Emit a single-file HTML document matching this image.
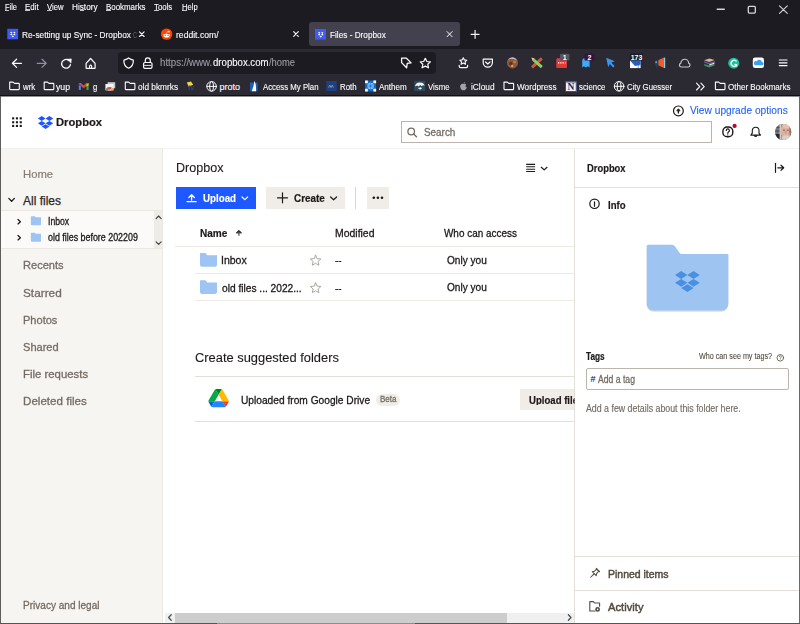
<!DOCTYPE html>
<html><head><meta charset="utf-8"><title>Files - Dropbox</title>
<style>
html,body{margin:0;padding:0;width:800px;height:624px;overflow:hidden;background:#1c1b22;font-family:"Liberation Sans",sans-serif;}
.a{position:absolute;box-sizing:border-box;}
.t{position:absolute;line-height:1;white-space:nowrap;transform-origin:0 0;}
svg{position:absolute;overflow:visible;}
</style></head><body>
<!-- browser chrome -->
<div class="a" style="left:0;top:0;width:800px;height:49px;background:#1c1b22"></div>
<div class="a" style="left:309px;top:22px;width:151px;height:24px;background:#42414d;border-radius:3px"></div>
<div class="a" style="left:0;top:49px;width:800px;height:46px;background:#2b2a33"></div>
<div class="a" style="left:118px;top:52px;width:318px;height:22px;background:#1c1b22;border-radius:4px"></div>
<div class="a" style="left:0;top:95px;width:800px;height:1px;background:#0f0f14"></div>
<!-- page -->
<div class="a" style="left:1px;top:96px;width:798px;height:527px;background:#ffffff"></div>
<div class="a" style="left:1px;top:148px;width:798px;height:1px;background:#f3f1ee"></div>
<div class="a" style="left:1px;top:149px;width:162px;height:474px;background:#f7f5f2"></div>
<div class="a" style="left:162px;top:149px;width:1px;height:474px;background:#ece9e5"></div>
<div class="a" style="left:1px;top:210px;width:161px;height:39px;background:#fbfaf8;border-top:1px solid #ebe8e4;border-bottom:1px solid #ebe8e4"></div>
<div class="a" style="left:154px;top:211px;width:8px;height:37px;background:#eeece9"></div>
<!-- search -->
<div class="a" style="left:401px;top:121px;width:311px;height:22px;border:1px solid #bbb5ae;background:#fff"></div>
<!-- buttons -->
<div class="a" style="left:176px;top:187px;width:80px;height:22px;background:#1e58ff"></div>
<div class="a" style="left:266px;top:187px;width:79px;height:22px;background:#f0ede8"></div>
<div class="a" style="left:355px;top:187px;width:1px;height:22px;background:#d9d5d0"></div>
<div class="a" style="left:367px;top:187px;width:22px;height:22px;background:#f0ede8"></div>
<!-- table lines -->
<div class="a" style="left:175px;top:246px;width:400px;height:1px;background:#eeebe6"></div>
<div class="a" style="left:195px;top:273px;width:380px;height:1px;background:#eeebe6"></div>
<div class="a" style="left:195px;top:300px;width:380px;height:1px;background:#eeebe6"></div>
<div class="a" style="left:195px;top:376px;width:380px;height:1px;background:#e3e0dc"></div>
<div class="a" style="left:195px;top:421px;width:380px;height:1px;background:#e3e0dc"></div>
<div class="a" style="left:376px;top:394px;width:24px;height:12px;background:#f0ede8;border-radius:6px"></div>
<div class="a" style="left:520px;top:389px;width:60px;height:21px;background:#f0ede8"></div>
<!-- right panel -->
<div class="a" style="left:574px;top:149px;width:225px;height:474px;background:#fff;border-left:1px solid #e3e0dc"></div>
<div class="a" style="left:575px;top:187px;width:224px;height:1px;background:#e3e0dc"></div>
<div class="a" style="left:575px;top:556px;width:224px;height:1px;background:#e3e0dc"></div>
<div class="a" style="left:575px;top:590px;width:224px;height:1px;background:#e3e0dc"></div>
<div class="a" style="left:586px;top:368px;width:203px;height:22px;border:1px solid #bbb5ae;border-radius:2px"></div>
<!-- h scrollbar -->
<div class="a" style="left:165px;top:613px;width:409px;height:10px;background:#f0f0f0"></div>
<div class="a" style="left:175px;top:613px;width:332px;height:10px;background:#cdcdcd"></div>
<!-- frame -->
<div class="a" style="left:0;top:96px;width:800px;height:1px;background:#8e8e90"></div>
<div class="a" style="left:0;top:96px;width:1px;height:528px;background:#5f5e5c"></div>
<div class="a" style="left:799px;top:96px;width:1px;height:528px;background:#6b6b6b"></div>
<div class="a" style="left:0;top:623px;width:800px;height:1px;background:#555555"></div>
<div class="a" style="left:217px;top:623px;width:198px;height:1px;background:#8e8e8e"></div>
<!-- menu underlines -->
<div class="a" style="left:5px;top:10px;width:4px;height:1px;background:#c8c8cc"></div>
<div class="a" style="left:25px;top:10px;width:5px;height:1px;background:#c8c8cc"></div>
<div class="a" style="left:47px;top:10px;width:5px;height:1px;background:#c8c8cc"></div>
<div class="a" style="left:80px;top:10px;width:4px;height:1px;background:#c8c8cc"></div>
<div class="a" style="left:106px;top:10px;width:5px;height:1px;background:#c8c8cc"></div>
<div class="a" style="left:154px;top:10px;width:5px;height:1px;background:#c8c8cc"></div>
<div class="a" style="left:182px;top:10px;width:5px;height:1px;background:#c8c8cc"></div>
<svg width="800" height="624" style="left:0;top:0">
<g fill="none" stroke="#fbfbfe" stroke-width="1.1" stroke-linecap="round" stroke-linejoin="round">
 <!-- tab close -->
 <path d="M139.5,31.9 L144.1,36.5 M144.1,31.9 L139.5,36.5" stroke-width="1.1"/>
 <path d="M293.7,31.7 L298.3,36.3 M298.3,31.7 L293.7,36.3" stroke-width="1.1"/>
 <path d="M447.1,31.6 L452.1,36.7 M452.1,31.6 L447.1,36.7" stroke-width="1"/>
 <!-- new tab -->
 <path d="M475.1,30.4 V38.3 M471.1,34.35 H479.1" stroke-width="1.15"/>
 <!-- window controls -->
 <path d="M717.3,9.2 H724.2" stroke-width="1.6" stroke="#d8d8dc"/>
 <rect x="748.3" y="6.3" width="7" height="6.8" rx="1" stroke="#d8d8dc" stroke-width="1.3"/>
 <path d="M779.5,5.8 L787.3,13.3 M787.3,5.8 L779.5,13.3" stroke="#d8d8dc" stroke-width="1.1"/>
 <!-- nav -->
 <path d="M21.5,63.3 H12.6 M16.6,59.2 L12.4,63.3 L16.6,67.4" stroke-width="1.2"/>
 <path d="M37.2,63.3 H46 M42,59.2 L46.2,63.3 L42,67.4" stroke="#8f8f9d" stroke-width="1.2"/>
 <path d="M70.4,64.6 A4.4,4.4 0 1 1 68.6,60.2" stroke-width="1.3"/>
 <path d="M67.3,59.3 L71.3,58.9 L71,62.8 Z" fill="#fbfbfe" stroke-width="0.6"/>
 <path d="M86.1,63.4 L90.6,58.5 L95.1,63.4 V67.9 Q95.1,68.3 94.7,68.3 H86.5 Q86.1,68.3 86.1,67.9 Z" stroke-width="1.2"/>
 <path d="M89.6,68.2 V66.1 A1,1 0 0 1 91.6,66.1 V68.2" stroke-width="1.1"/>
 <!-- url icons -->
 <path d="M128.6,57.9 Q131,59.6 133.3,60.2 Q133.6,66 128.6,68.2 Q123.6,66 123.9,60.2 Q126.2,59.6 128.6,57.9 Z" stroke-width="1.2"/>
 <path d="M145.3,62.3 V60.4 A2.5,2.5 0 0 1 150.3,60.4 V62.3" stroke-width="1.2"/>
 <rect x="143.6" y="62.5" width="8.4" height="5.8" rx="1.3" stroke-width="1.2"/>
 <path d="M144.5,65.4 H151" stroke-width="0.9"/>
 <path d="M401.6,58.2 H406.4 L411.1,62.9 L407.2,63.4 L406.6,67.8 L401.6,62.6 Z" stroke-width="1.3"/>
 <path d="M425.3,58.3 L426.9,61.5 L430.4,61.9 L427.8,64.3 L428.5,67.8 L425.3,66.1 L422.1,67.8 L422.8,64.3 L420.2,61.9 L423.7,61.5 Z" stroke-width="1.2"/>
 <!-- ext: star tray -->
 <path d="M463.3,57.7 L464.4,59.9 L466.8,60.2 L465.1,61.9 L465.5,64.3 L463.3,63.1 L461.1,64.3 L461.5,61.9 L459.8,60.2 L462.2,59.9 Z" stroke-width="1.1"/>
 <path d="M459.2,65.3 V66.3 Q459.2,67.6 460.5,67.6 H466.3 Q467.6,67.6 467.6,66.3 V65.3" stroke-width="1.2"/>
 <!-- pocket -->
 <path d="M483.2,59.2 H492.4 V62.6 A4.6,4.6 0 0 1 483.2,62.6 Z" stroke-width="1.2"/>
 <path d="M485.6,62 L487.8,64 L490,62" stroke-width="1.2"/>
 <!-- cloud outline -->
 <path d="M681.2,67 H688.2 A2,2 0 0 0 688.6,63.1 A3.7,3.7 0 0 0 680.9,63.1 A2,2 0 0 0 681.2,67 Z" stroke="#c5c5cc" stroke-width="1.2"/>
 <!-- hamburger -->
 <path d="M779.3,60 H787 M779.3,62.8 H787 M779.3,65.6 H787" stroke-width="1.2"/>
 <!-- bookmark folders -->
 <path id="bf" d="M9.7,82.1 H13 L14.5,83.4 H18.7 Q19.3,83.4 19.3,84 V89 Q19.3,89.6 18.7,89.6 H10.3 Q9.7,89.6 9.7,89 Z" stroke-width="1.1"/>
 <use href="#bf" x="34.5"/>
 <use href="#bf" x="115.6"/>
 <use href="#bf" x="494.3"/>
 <use href="#bf" x="705.7"/>
 <!-- globe -->
 <g id="gl" stroke-width="1">
  <circle cx="211.6" cy="86.4" r="4.8"/>
  <ellipse cx="211.6" cy="86.4" rx="2" ry="4.8"/>
  <path d="M206.9,86.4 H216.3"/>
 </g>
 <use href="#gl" x="407.5" y="-0.1"/>
 <!-- >> -->
 <path d="M696.5,83.2 L699.8,86.6 L696.5,90 M700.9,83.2 L704.2,86.6 L700.9,90" stroke-width="1.1"/>
</g>
<!-- tab icons -->
<rect x="7.3" y="28.8" width="10.8" height="10.5" fill="#3e5bfa"/>
<rect x="315" y="29" width="11" height="10.6" fill="#3e5bfa"/>
<g id="dbw" fill="#fff"><path d="M10.05,32.50 L11.30,31.65 L12.55,32.50 L11.30,33.35 Z M13.15,32.50 L14.40,31.65 L15.65,32.50 L14.40,33.35 Z M10.05,34.40 L11.30,33.55 L12.55,34.40 L11.30,35.25 Z M13.15,34.40 L14.40,33.55 L15.65,34.40 L14.40,35.25 Z M11.60,36.30 L12.85,35.45 L14.10,36.30 L12.85,37.15 Z"/></g>
<use href="#dbw" x="307.9" y="0.3"/>
<circle cx="166.6" cy="34.1" r="5.7" fill="#ff4500"/>
<path d="M163.2,34.4 Q166.6,33.2 170,34.4 Q170,37.4 166.6,37.6 Q163.2,37.4 163.2,34.4 Z" fill="#fff"/>
<circle cx="168.9" cy="31.6" r="0.9" fill="#fff"/>
<circle cx="165.1" cy="35.3" r="0.75" fill="#ff4500"/><circle cx="168.1" cy="35.3" r="0.75" fill="#ff4500"/>
<path d="M166.6,33.6 L167.3,31.4 L168.6,31.6" stroke="#fff" stroke-width="0.5" fill="none"/>
<!-- extensions -->
<circle cx="512.5" cy="62.8" r="5.6" fill="#8a5a3a"/>
<path d="M508,60 Q512,57.5 517,60.5 A5.6,5.6 0 0 0 512.5,57.2 A5.6,5.6 0 0 0 508,60 Z" fill="#c9b8c8"/>
<circle cx="510.8" cy="63.6" r="1.8" fill="#5a3420"/>
<circle cx="514.6" cy="62" r="1.3" fill="#c08050"/>
<circle cx="512.2" cy="66" r="1.2" fill="#d09a6a"/>
<path d="M541.8,58.4 L532,67.4" stroke="#d9553a" stroke-width="2.8" stroke-linecap="butt"/>
<path d="M533.6,59.9 L541.8,67.2" stroke="#8ccc66" stroke-width="3" stroke-linecap="butt"/>
<path d="M531.4,57.6 L534.7,58.6 L532.6,61 Z" fill="#e3d3a8"/>
<rect x="556.3" y="58.2" width="10.7" height="9.9" rx="1.2" fill="#e53935"/>
<path d="M558,62.8 H565.6" stroke="#fff" stroke-width="1.3" stroke-dasharray="1.3 1"/>
<rect x="560" y="53.8" width="9.4" height="6.8" rx="1" fill="#55555c"/>
<text x="564.7" y="59.8" font-family="Liberation Sans" font-weight="bold" font-size="7" fill="#fff" text-anchor="middle">1</text>
<path d="M582.2,67.4 V61.5 A3.7,3.7 0 0 1 589.6,61.5 V67.4 L587.8,66.2 L585.9,67.4 L584,66.2 Z" fill="#3fa9f5"/>
<rect x="584.4" y="53.8" width="10" height="6.8" rx="1" fill="#3b0f3e"/>
<text x="589.4" y="59.8" font-family="Liberation Sans" font-weight="bold" font-size="7" fill="#fff" text-anchor="middle">2</text>
<path d="M606.2,57.8 L614.8,61.3 L611.3,62.6 L614.6,66 L613.1,67.4 L609.9,64 L608.2,67.3 Z" fill="#3b95ee"/>
<rect x="630" y="60.6" width="10.6" height="7.5" fill="#fff"/>
<path d="M630,60.6 L640.6,60.6 L640.6,64.5 L635,66 Z" fill="#1f62c8"/>
<path d="M636,65 H640.6 M638.2,63.5 V68" stroke="#1f62c8" stroke-width="0.6"/>
<rect x="629.8" y="53.6" width="13.4" height="7" rx="1" fill="#1e1d24"/>
<text x="636.5" y="59.8" font-family="Liberation Sans" font-weight="bold" font-size="7" fill="#fff" text-anchor="middle">173</text>
<path d="M658.2,60.2 L664,57.6 V68 L658.2,65.2 Z" fill="#f15a29"/>
<rect x="664" y="57.6" width="1.2" height="10.4" fill="#8ec9e8"/>
<rect x="655" y="60.2" width="3.2" height="5" fill="#1d3f5e"/>
<circle cx="656.2" cy="62.3" r="1" fill="#5fa8d8"/>
<rect x="656" y="65" width="1.6" height="2.6" fill="#1d3f5e"/>
<!-- books -->
<path d="M704,60.3 L709.5,58.4 L714.6,60 L709.2,62 Z" fill="#d8b48a"/>
<path d="M704,61.2 L709.2,63 L714.6,61 V62.5 L709.2,64.5 L704,62.6 Z" fill="#6b5bb5"/>
<path d="M704.3,64 L709.2,65.6 L714.4,63.8 V65.6 L709.2,67.5 L704.3,65.7 Z" fill="#3f8f5a"/>
<path d="M709.2,64.5 L714.6,62.5 L714.4,63.8 L709.2,65.6 Z" fill="#eee"/>
<circle cx="733.7" cy="63.2" r="5.5" fill="#15c39a"/>
<path d="M736.2,61 A3,3 0 1 0 736.4,65.3" fill="none" stroke="#fff" stroke-width="1.3" stroke-linecap="round"/>
<path d="M734.3,64.3 L736.7,64.6 L736.6,66.6" fill="none" stroke="#fff" stroke-width="1.1"/>
<rect x="752.8" y="57.6" width="11.2" height="10.5" rx="2.4" fill="#fff"/>
<path d="M755.2,65.2 H762 A1.6,1.6 0 0 0 762,62 A2.8,2.8 0 0 0 756.8,61.3 A2,2 0 0 0 755.2,65.2 Z" fill="#3aa0f0"/>
<!-- bookmark icons -->
<path d="M79.9,83.6 L83.7,86.9 L87.5,83.6" stroke="#ea4335" stroke-width="2.2" fill="none" stroke-linejoin="miter"/>
<rect x="78.8" y="83.2" width="2.1" height="6.7" fill="#4285f4"/>
<rect x="86.5" y="83.2" width="2.1" height="6.7" fill="#34a853"/>
<path d="M86.5,84.6 L88.6,83 V85.2 L86.5,86.6 Z" fill="#fbbc04"/>
<path d="M78.8,85.2 V83.4 L80.9,85 V86.6 Z" fill="#c5221f"/>
<rect x="107.6" y="82.2" width="7.6" height="6" fill="#c8c8cc"/>
<rect x="105.4" y="84" width="8.2" height="6.4" fill="#f4f4f4"/>
<defs><clipPath id="chc"><rect x="105.4" y="84" width="8.2" height="6.4"/></clipPath></defs>
<g clip-path="url(#chc)">
<path d="M106,90.4 A3.5,3.5 0 0 1 113,90.4 Z" fill="#ea4335"/>
<path d="M106,90.4 A3.5,3.5 0 0 1 107.4,87.6 L109.5,90.4 Z" fill="#34a853"/>
<path d="M111.6,87.6 A3.5,3.5 0 0 1 113,90.4 H109.5 Z" fill="#fbbc04"/>
<circle cx="109.5" cy="90.4" r="1.5" fill="#fff"/>
<circle cx="109.5" cy="90.4" r="1.1" fill="#4285f4"/>
</g>
<path d="M186.8,82.6 L191,81.4 L193.2,84.8 L188.6,86.4 Z" fill="#f5d442"/>
<text x="188.3" y="90.4" font-family="Liberation Sans" font-size="7.5" fill="#2a5a90">tv</text>
<path d="M250,82.5 H257.6 V91.3 H250 Z" fill="#1c5fb8"/>
<path d="M254.6,80.8 Q256.4,85 256,91.3 H251.8 Q253.8,86 254.6,80.8 Z" fill="#fff"/>
<rect x="326.2" y="81" width="10.6" height="10" fill="#1f3f7f"/>
<path d="M328.6,87.6 L329.8,85.2 L331,87.6 L332.2,85.2 L333.4,87.6" fill="none" stroke="#8fa5cf" stroke-width="0.8"/>
<rect x="365.1" y="80.5" width="11" height="11" fill="#0b6dcd"/>
<path d="M365.1,80.5 h2.7 v2.7 h-2.7Z M373.4,80.5 h2.7 v2.7 h-2.7Z M365.1,88.8 h2.7 v2.7 h-2.7Z M373.4,88.8 h2.7 v2.7 h-2.7Z" fill="#fff"/>
<circle cx="370.6" cy="86" r="3.2" fill="#9cc6f0"/>
<path d="M370.6,83 V89 M367.6,86 H373.6 M368.5,83.9 L372.7,88.1 M372.7,83.9 L368.5,88.1" stroke="#0b6dcd" stroke-width="0.6"/>
<rect x="414.2" y="80.8" width="11" height="10.2" fill="#2c4a5a"/>
<path d="M415,86.6 Q415.6,82.4 419.6,82.4 Q423.8,82.2 424.6,85.8 L423,85.2 L421.6,86.2 L420.2,85 L418.6,86.4 L417.2,85.4 Z" fill="#f2f2f2"/>
<path d="M417.4,87.4 Q420,90.8 422.6,87.4 Q420,89 417.4,87.4 Z" fill="#f2f2f2"/>
<circle cx="420.2" cy="88.4" r="1.1" fill="#f2f2f2"/>
<path d="M463.4,84 Q461.2,83.4 460.2,85.6 Q459.8,88.2 461.8,90 Q462.6,90.6 463.4,90 Q464.2,90.6 465,90 Q466.4,88.8 466.8,87.6 Q465.4,86.8 465.6,85.2 Q466,84.4 466.4,84.3 Q465.4,83.4 463.4,84 Z M463.4,83.6 Q463.6,82.2 465,81.9 Q464.9,83.3 463.4,83.6 Z" fill="#a3a3aa"/>
<rect x="565.2" y="81.6" width="11.4" height="10.2" fill="#f4f4f8"/>
<rect x="565.6" y="82" width="10.6" height="9.4" fill="none" stroke="#1b2a6b" stroke-width="0.8"/>
<text x="570.9" y="90.4" font-family="Liberation Serif" font-weight="bold" font-size="9.5" fill="#1b2a6b" text-anchor="middle">N</text>
</svg>
<svg width="800" height="624" style="left:0;top:0">
<!-- grid -->
<g fill="#1e1919">
 <rect x="12.1" y="117.3" width="2.1" height="2.1"/><rect x="15.9" y="117.3" width="2.1" height="2.1"/><rect x="19.7" y="117.3" width="2.1" height="2.1"/>
 <rect x="12.1" y="121.2" width="2.1" height="2.1"/><rect x="15.9" y="121.2" width="2.1" height="2.1"/><rect x="19.7" y="121.2" width="2.1" height="2.1"/>
 <rect x="12.1" y="124.9" width="2.1" height="2.1"/><rect x="15.9" y="124.9" width="2.1" height="2.1"/><rect x="19.7" y="124.9" width="2.1" height="2.1"/>
</g>
<!-- dropbox logo -->
<g transform="translate(37.9,116) scale(0.0652)" fill="#1e55ff">
 <path d="M58.86 0L0 37.5 58.86 75l58.87-37.5L58.86 0zM176.59 0l-58.86 37.5L176.59 75l58.86-37.5L176.59 0zM0 112.5L58.86 150l58.87-37.5L58.86 75 0 112.5zM176.59 75l-58.86 37.5 58.86 37.5 58.86-37.5L176.59 75zM58.86 162.5l58.87 37.5 58.86-37.5-58.86-37.5-58.86 37.5z"/>
</g>
<g fill="none" stroke="#1e1919" stroke-linecap="round" stroke-linejoin="round">
 <!-- upgrade -->
 <circle cx="678.4" cy="110.9" r="4.9" stroke-width="1.2"/>
 <path d="M678.4,109.6 V113" stroke-width="1.3"/>
 <path d="M676.9,110.6 L678.4,108.8 L679.9,110.6 Z" fill="#1e1919" stroke-width="0.8"/>
 <!-- help -->
 <rect x="722.9" y="127" width="9.9" height="9.8" rx="4.3" stroke-width="1.4"/>
 <path d="M726.3,130.5 A1.55,1.55 0 1 1 728.5,131.9 Q727.8,132.3 727.8,133.3" stroke-width="1.2"/>
 <circle cx="727.8" cy="134.9" r="0.65" fill="#1e1919" stroke="none"/>
 <!-- bell -->
 <path d="M750.8,135.1 H760.5 L759,133.2 V130.6 A3.2,3.2 0 0 0 752.3,130.6 V133.2 Z" stroke-width="1.1"/>
 <path d="M754.5,135.6 A1.2,1.2 0 0 0 756.8,135.6" stroke-width="1.1" fill="#1e1919"/>
 <!-- search -->
 <circle cx="411.2" cy="131.5" r="3.3" stroke="#736c64" stroke-width="1.3"/>
 <path d="M413.6,134 L416.5,136.8" stroke="#736c64" stroke-width="1.4"/>
 <!-- sidebar chevrons -->
 <path d="M8.8,198.4 L11.6,201.2 L14.4,198.4" stroke-width="1.3"/>
 <path d="M18,219.5 L20.4,221.7 L18,223.9" stroke-width="1.3"/>
 <path d="M18,235.5 L20.4,237.7 L18,239.9" stroke-width="1.3"/>
 <!-- tree scroll arrows -->
 <path d="M156.1,218.6 L158.6,216 L161.1,218.6" stroke="#45403b" stroke-width="1.15"/>
 <path d="M156.1,241.8 L158.6,244.4 L161.1,241.8" stroke="#45403b" stroke-width="1.15"/>
 <!-- list view -->
 <path d="M526.2,164.4 H535.1 M526.2,166.7 H535.1 M526.2,169.2 H535.1 M526.2,171.5 H535.1" stroke-width="1.1" stroke-linecap="butt"/>
 <path d="M541.3,167.3 L544.2,169.9 L547,167.3" stroke-width="1.2"/>
 <!-- upload icon -->
 <path d="M191.6,200.2 V194.8 M188.8,197.5 L191.6,194.6 L194.4,197.5" stroke="#fff" stroke-width="1.3"/>
 <path d="M187.1,201.7 H196.2" stroke="#fff" stroke-width="1.2"/>
 <path d="M242,197 L244.8,199.6 L247.6,197" stroke="#fff" stroke-width="1.2"/>
 <!-- create -->
 <path d="M282.5,192.8 V202.8 M277.5,197.8 H287.5" stroke-width="1.2"/>
 <path d="M330.6,197 L333.6,199.8 L336.6,197" stroke-width="1.2"/>
 <!-- sort arrow -->
 <path d="M236.6,232.6 L238.9,230.5 L241.2,232.6 Z" stroke-width="1" fill="#1e1919"/>
 <path d="M238.9,231.5 V235.7" stroke-width="1.3" stroke="#555" stroke-linecap="butt"/>
 <!-- stars -->
 <path id="st" d="M315.6,255.3 L317.1,258.6 L320.9,259 L318.1,261.5 L318.9,265.2 L315.6,263.3 L312.3,265.2 L313.1,261.5 L310.3,259 L314.1,258.6 Z" stroke="#a39e98" stroke-width="0.9"/>
 <use href="#st" y="27.5"/>
 <!-- collapse -->
 <path d="M775.5,163.4 V172.3" stroke-width="1.2"/>
 <path d="M777.8,167.8 H783.6 M781,165.2 L783.7,167.8 L781,170.4" stroke-width="1.2"/>
 <!-- info -->
 <circle cx="594.5" cy="203.8" r="4.7" stroke-width="1.2"/>
 <path d="M594.5,201.8 V206.3" stroke-width="1.2"/>
 <!-- tags help -->
 <circle cx="780.3" cy="357.8" r="3.3" stroke="#524a3e" stroke-width="0.8"/>
 <path d="M779.3,356.7 A1,1 0 1 1 780.7,357.7 Q780.3,358 780.3,358.5" stroke="#524a3e" stroke-width="0.7"/>
 <circle cx="780.3" cy="359.6" r="0.3" fill="#524a3e" stroke="none"/>
 <!-- pin -->
 <g transform="translate(594.6,573.3) rotate(45) scale(0.9)" stroke="#524a3e" stroke-width="1.15">
  <path d="M-1.7,-5 V-1.6 L-3.1,0.6 H3.1 L1.7,-1.6 V-5 Z"/>
  <path d="M-2.6,-5.2 H2.6"/>
  <path d="M0,0.8 V6.2"/>
 </g>
 <!-- activity -->
 <path d="M595,611 H589.8 V601.6 H593.4 L594.6,603 H599.6 V606.2" stroke="#524a3e" stroke-width="1.1"/>
 <!-- h-scroll arrows -->
 <path d="M171.2,614.8 L168.6,617.5 L171.2,620.2" stroke="#505050" stroke-width="1.3"/>
 <path d="M568.4,614.8 L571,617.5 L568.4,620.2" stroke="#505050" stroke-width="1.3"/>
</g>
<circle cx="734.6" cy="125.9" r="2.1" fill="#b3063b"/>
<circle cx="597.6" cy="609.4" r="2.4" fill="#524a3e"/>
<circle cx="597.6" cy="609.4" r="0.8" fill="#fff"/>
<!-- more dots -->
<circle cx="373.8" cy="197.8" r="1.3" fill="#1e1919"/><circle cx="377.9" cy="197.8" r="1.3" fill="#1e1919"/><circle cx="382" cy="197.8" r="1.3" fill="#1e1919"/>
<!-- "--" lines handled by text -->
<!-- avatar -->
<defs>
 <clipPath id="av"><circle cx="783.2" cy="131.9" r="8.1"/></clipPath>
 <linearGradient id="face" x1="0" y1="0" x2="0" y2="1"><stop offset="0" stop-color="#e8b8a0"/><stop offset="0.6" stop-color="#d49a84"/><stop offset="1" stop-color="#e9e2da"/></linearGradient>
</defs>
<g clip-path="url(#av)">
 <rect x="775" y="123.8" width="17" height="17" fill="#a89a8c"/>
 <rect x="775" y="123.8" width="5" height="17" fill="#777580"/>
 <rect x="775" y="127" width="5" height="1" fill="#4a4850"/>
 <rect x="775" y="130.5" width="5" height="1" fill="#4a4850"/>
 <rect x="775" y="134" width="5.5" height="7" fill="#262626"/>
 <rect x="779.6" y="123.8" width="1.3" height="17" fill="#d8d4cc"/>
 <ellipse cx="786" cy="131" rx="5.4" ry="7.2" fill="#ddb0a0"/>
 <path d="M783,130.2 h2 M786.8,130.2 h2" stroke="#6a4a40" stroke-width="0.8"/>
 <path d="M785.8,131 v2.5" stroke="#b88878" stroke-width="0.7"/>
 <ellipse cx="787" cy="125.5" rx="4.5" ry="2.5" fill="#e0c4b4"/>
 <ellipse cx="785.8" cy="137.8" rx="4" ry="2.6" fill="#d8d0c8"/>
 <ellipse cx="790.8" cy="131" rx="1.6" ry="5" fill="#8a7a6a"/>
</g>
<!-- tree folders -->
<path id="tf" d="M30.9,216.2 H34.8 L35.8,217.2 H41 V224.3 Q41,225.2 40.1,225.2 H31.8 Q30.9,225.2 30.9,224.3 Z" fill="#9dc4f3"/>
<use href="#tf" y="16.5"/>
<!-- row folders -->
<path id="rf" d="M200,253.6 Q200,253 200.6,253 H205.6 L207.2,255.2 H217 V264.8 A2,2 0 0 1 215,266.8 H202 A2,2 0 0 1 200,264.8 Z" fill="#9dc4f3"/>
<use href="#rf" y="27.2"/>
<!-- big folder -->
<defs><filter id="sh" x="-10%" y="-10%" width="120%" height="130%"><feDropShadow dx="0" dy="0.8" stdDeviation="0.6" flood-color="#000" flood-opacity="0.25"/></filter></defs>
<path d="M646.7,246.2 Q646.7,244.7 648.2,244.7 H672.5 Q674,244.7 674.8,246.2 L679.5,252.8 Q680.2,254 681.7,254 H728.3 V304 A6.5,6.5 0 0 1 721.8,310.5 H653.2 A6.5,6.5 0 0 1 646.7,304 Z" fill="#9ec5f2" filter="url(#sh)"/>
<g transform="translate(675,271) scale(0.1051)" fill="#4a90e2">
 <path d="M58.86 0L0 37.5 58.86 75l58.87-37.5L58.86 0zM176.59 0l-58.86 37.5L176.59 75l58.86-37.5L176.59 0zM0 112.5L58.86 150l58.87-37.5L58.86 75 0 112.5zM176.59 75l-58.86 37.5 58.86 37.5 58.86-37.5L176.59 75zM58.86 162.5l58.87 37.5 58.86-37.5-58.86-37.5-58.86 37.5z"/>
</g>
<!-- google drive -->
<g transform="translate(208.4,388.9) scale(0.2337)">
<path d="m6.6 66.85 3.85 6.65c.8 1.4 1.950 2.5 3.3 3.3l13.75-23.8h-27.5c0 1.55.4 3.1 1.2 4.5z" fill="#0066da"/>
<path d="m43.65 25-13.75-23.8c-1.35.8-2.5 1.9-3.3 3.3l-25.4 44a9.06 9.06 0 0 0 -1.2 4.5h27.5z" fill="#00ac47"/>
<path d="m73.550 76.8c1.350-.8 2.5-1.9 3.3-3.3l1.6-2.750 7.650-13.250c.8-1.4 1.2-2.950 1.2-4.5h-27.502l5.852 11.5z" fill="#ea4335"/>
<path d="m43.65 25 13.75-23.8c-1.35-.8-2.9-1.2-4.5-1.2h-18.5c-1.6 0-3.15.45-4.5 1.2z" fill="#00832d"/>
<path d="m59.8 53h-32.3l-13.75 23.8c1.350.8 2.9 1.2 4.5 1.2h50.8c1.6 0 3.150-.45 4.5-1.2z" fill="#2684fc"/>
<path d="m73.4 26.5-12.7-22c-.8-1.4-1.950-2.5-3.3-3.3l-13.75 23.8 16.150 28h27.450c0-1.550-.4-3.1-1.2-4.5z" fill="#ffba00"/>
</g>
</svg>

<span class="t" style="left:5.00px;top:2.98px;font-size:9px;color:#fbfbfe;-webkit-text-stroke:0.12px #fbfbfe;transform:scaleX(0.8278);">File</span>
<span class="t" style="left:25.00px;top:2.98px;font-size:9px;color:#fbfbfe;-webkit-text-stroke:0.12px #fbfbfe;transform:scaleX(0.8746);">Edit</span>
<span class="t" style="left:47.00px;top:2.98px;font-size:9px;color:#fbfbfe;-webkit-text-stroke:0.12px #fbfbfe;transform:scaleX(0.8566);">View</span>
<span class="t" style="left:72.00px;top:2.98px;font-size:9px;color:#fbfbfe;-webkit-text-stroke:0.12px #fbfbfe;transform:scaleX(0.9122);">History</span>
<span class="t" style="left:105.60px;top:2.98px;font-size:9px;color:#fbfbfe;-webkit-text-stroke:0.12px #fbfbfe;transform:scaleX(0.8789);">Bookmarks</span>
<span class="t" style="left:154.40px;top:2.98px;font-size:9px;color:#fbfbfe;-webkit-text-stroke:0.12px #fbfbfe;transform:scaleX(0.8647);">Tools</span>
<span class="t" style="left:181.90px;top:2.98px;font-size:9px;color:#fbfbfe;-webkit-text-stroke:0.12px #fbfbfe;transform:scaleX(0.8430);">Help</span>
<span class="t" style="left:21.60px;top:31.08px;font-size:9px;color:#fbfbfe;-webkit-text-stroke:0.12px #fbfbfe;transform:scaleX(0.9228);">Re-setting up Sync - Dropbox</span>
<span class="t" style="left:133.20px;top:31.08px;font-size:9px;color:rgba(251,251,254,0.3);transform:scaleX(0.6143);">C</span>
<span class="t" style="left:176.00px;top:31.08px;font-size:9px;color:#fbfbfe;-webkit-text-stroke:0.12px #fbfbfe;transform:scaleX(0.9552);">reddit.com/</span>
<span class="t" style="left:329.80px;top:31.08px;font-size:9px;color:#fbfbfe;-webkit-text-stroke:0.12px #fbfbfe;transform:scaleX(0.9136);">Files - Dropbox</span>
<span class="t" style="left:160.00px;top:58.33px;font-size:10px;color:#9a99a3;-webkit-text-stroke:0.12px #9a99a3;transform:scaleX(0.9694);">https://www.</span>
<span class="t" style="left:212.80px;top:58.33px;font-size:10px;color:#fbfbfe;-webkit-text-stroke:0.12px #fbfbfe;transform:scaleX(0.9604);">dropbox.com</span>
<span class="t" style="left:268.50px;top:58.33px;font-size:10px;color:#9a99a3;-webkit-text-stroke:0.12px #9a99a3;transform:scaleX(0.9387);">/home</span>
<span class="t" style="left:22.87px;top:82.68px;font-size:9px;color:#fbfbfe;-webkit-text-stroke:0.12px #fbfbfe;transform:scaleX(0.8712);">wrk</span>
<span class="t" style="left:56.00px;top:82.68px;font-size:9px;color:#fbfbfe;-webkit-text-stroke:0.12px #fbfbfe;transform:scaleX(0.9652);">yup</span>
<span class="t" style="left:92.50px;top:82.68px;font-size:9px;color:#fbfbfe;-webkit-text-stroke:0.12px #fbfbfe;transform:scaleX(0.8500);">g</span>
<span class="t" style="left:137.50px;top:82.68px;font-size:9px;color:#fbfbfe;-webkit-text-stroke:0.12px #fbfbfe;transform:scaleX(0.9202);">old bkmrks</span>
<span class="t" style="left:219.50px;top:82.68px;font-size:9px;color:#fbfbfe;-webkit-text-stroke:0.12px #fbfbfe;">proto</span>
<span class="t" style="left:262.50px;top:82.68px;font-size:9px;color:#fbfbfe;-webkit-text-stroke:0.12px #fbfbfe;transform:scaleX(0.8670);">Access My Plan</span>
<span class="t" style="left:339.50px;top:82.68px;font-size:9px;color:#fbfbfe;-webkit-text-stroke:0.12px #fbfbfe;transform:scaleX(0.8682);">Roth</span>
<span class="t" style="left:378.75px;top:82.68px;font-size:9px;color:#fbfbfe;-webkit-text-stroke:0.12px #fbfbfe;transform:scaleX(0.8929);">Anthem</span>
<span class="t" style="left:428.00px;top:82.68px;font-size:9px;color:#fbfbfe;-webkit-text-stroke:0.12px #fbfbfe;transform:scaleX(0.8656);">Visme</span>
<span class="t" style="left:471.00px;top:82.68px;font-size:9px;color:#fbfbfe;-webkit-text-stroke:0.12px #fbfbfe;transform:scaleX(0.9212);">iCloud</span>
<span class="t" style="left:517.00px;top:82.68px;font-size:9px;color:#fbfbfe;-webkit-text-stroke:0.12px #fbfbfe;transform:scaleX(0.9122);">Wordpress</span>
<span class="t" style="left:578.60px;top:82.68px;font-size:9px;color:#fbfbfe;-webkit-text-stroke:0.12px #fbfbfe;transform:scaleX(0.8653);">science</span>
<span class="t" style="left:626.60px;top:82.68px;font-size:9px;color:#fbfbfe;-webkit-text-stroke:0.12px #fbfbfe;transform:scaleX(0.8670);">City Guesser</span>
<span class="t" style="left:728.00px;top:82.68px;font-size:9px;color:#fbfbfe;-webkit-text-stroke:0.12px #fbfbfe;transform:scaleX(0.8933);">Other Bookmarks</span>
<span class="t" style="left:55.80px;top:116.99px;font-size:11px;color:#1e1919;font-weight:bold;-webkit-text-stroke:0.2px #1e1919;transform:scaleX(1.0184);">Dropbox</span>
<span class="t" style="left:689.75px;top:104.69px;font-size:11px;color:#1f5ffb;-webkit-text-stroke:0.1px #1f5ffb;transform:scaleX(0.9261);">View upgrade options</span>
<span class="t" style="left:423.75px;top:126.99px;font-size:11px;color:#736c64;-webkit-text-stroke:0.3px #736c64;transform:scaleX(0.8997);">Search</span>
<span class="t" style="left:23.00px;top:168.89px;font-size:11px;color:#857d76;-webkit-text-stroke:0.2px #857d76;transform:scaleX(1.0265);">Home</span>
<span class="t" style="left:23.00px;top:194.94px;font-size:12px;color:#2a2624;-webkit-text-stroke:0.25px #2a2624;">All files</span>
<span class="t" style="left:47.80px;top:217.44px;font-size:10px;color:#1e1919;-webkit-text-stroke:0.3px #1e1919;transform:scaleX(0.8666);">Inbox</span>
<span class="t" style="left:47.80px;top:233.44px;font-size:10px;color:#1e1919;-webkit-text-stroke:0.3px #1e1919;transform:scaleX(0.8876);">old files before 202209</span>
<span class="t" style="left:23.20px;top:260.17px;font-size:11.5px;color:#736c64;-webkit-text-stroke:0.3px #736c64;transform:scaleX(0.9614);">Recents</span>
<span class="t" style="left:23.20px;top:287.57px;font-size:11.5px;color:#736c64;-webkit-text-stroke:0.3px #736c64;transform:scaleX(1.0264);">Starred</span>
<span class="t" style="left:23.20px;top:314.67px;font-size:11.5px;color:#736c64;-webkit-text-stroke:0.3px #736c64;transform:scaleX(0.9597);">Photos</span>
<span class="t" style="left:23.20px;top:341.77px;font-size:11.5px;color:#736c64;-webkit-text-stroke:0.3px #736c64;transform:scaleX(0.9622);">Shared</span>
<span class="t" style="left:23.20px;top:368.87px;font-size:11.5px;color:#736c64;-webkit-text-stroke:0.3px #736c64;transform:scaleX(0.9897);">File requests</span>
<span class="t" style="left:23.20px;top:396.17px;font-size:11.5px;color:#736c64;-webkit-text-stroke:0.3px #736c64;transform:scaleX(1.0089);">Deleted files</span>
<span class="t" style="left:22.50px;top:600.09px;font-size:11px;color:#736c64;-webkit-text-stroke:0.3px #736c64;transform:scaleX(0.9133);">Privacy and legal</span>
<span class="t" style="left:175.75px;top:162.24px;font-size:12px;color:#1e1919;-webkit-text-stroke:0.1px #1e1919;transform:scaleX(1.0461);">Dropbox</span>
<span class="t" style="left:203.30px;top:192.61px;font-size:10.5px;color:#ffffff;font-weight:bold;-webkit-text-stroke:0.15px #ffffff;transform:scaleX(0.9298);">Upload</span>
<span class="t" style="left:294.00px;top:193.31px;font-size:10.5px;color:#1e1919;font-weight:bold;-webkit-text-stroke:0.2px #1e1919;transform:scaleX(0.9438);">Create</span>
<span class="t" style="left:200.20px;top:228.09px;font-size:11px;color:#1e1919;font-weight:bold;-webkit-text-stroke:0.2px #1e1919;transform:scaleX(0.9148);">Name</span>
<span class="t" style="left:334.75px;top:228.09px;font-size:11px;color:#1e1919;-webkit-text-stroke:0.3px #1e1919;transform:scaleX(0.9491);">Modified</span>
<span class="t" style="left:444.00px;top:227.59px;font-size:11px;color:#1e1919;-webkit-text-stroke:0.3px #1e1919;transform:scaleX(0.9027);">Who can access</span>
<span class="t" style="left:220.79px;top:255.39px;font-size:11px;color:#1e1919;-webkit-text-stroke:0.3px #1e1919;transform:scaleX(0.9561);">Inbox</span>
<span class="t" style="left:334.75px;top:255.39px;font-size:11px;color:#1e1919;-webkit-text-stroke:0.3px #1e1919;transform:scaleX(0.8939);">--</span>
<span class="t" style="left:446.80px;top:255.39px;font-size:11px;color:#1e1919;-webkit-text-stroke:0.3px #1e1919;transform:scaleX(0.9170);">Only you</span>
<span class="t" style="left:221.75px;top:282.69px;font-size:11px;color:#1e1919;-webkit-text-stroke:0.3px #1e1919;transform:scaleX(0.9244);">old files ... 2022...</span>
<span class="t" style="left:334.75px;top:282.69px;font-size:11px;color:#1e1919;-webkit-text-stroke:0.3px #1e1919;transform:scaleX(0.8939);">--</span>
<span class="t" style="left:446.80px;top:282.29px;font-size:11px;color:#1e1919;-webkit-text-stroke:0.3px #1e1919;transform:scaleX(0.9170);">Only you</span>
<span class="t" style="left:194.60px;top:352.34px;font-size:12px;color:#1e1919;-webkit-text-stroke:0.1px #1e1919;transform:scaleX(1.0732);">Create suggested folders</span>
<span class="t" style="left:240.80px;top:394.69px;font-size:11px;color:#1e1919;-webkit-text-stroke:0.3px #1e1919;transform:scaleX(0.9262);">Uploaded from Google Drive</span>
<span class="t" style="left:380.00px;top:395.38px;font-size:9px;color:#736c64;-webkit-text-stroke:0.3px #736c64;transform:scaleX(0.8915);">Beta</span>
<span class="t" style="left:528.50px;top:394.61px;font-size:10.5px;color:#1e1919;font-weight:bold;-webkit-text-stroke:0.2px #1e1919;transform:scaleX(0.9134);width:49.8px;overflow:hidden;">Upload files</span>
<span class="t" style="left:586.70px;top:163.09px;font-size:11px;color:#1e1919;font-weight:bold;-webkit-text-stroke:0.2px #1e1919;transform:scaleX(0.8525);">Dropbox</span>
<span class="t" style="left:608.20px;top:199.69px;font-size:11px;color:#1e1919;font-weight:bold;-webkit-text-stroke:0.2px #1e1919;transform:scaleX(0.8709);">Info</span>
<span class="t" style="left:586.30px;top:352.14px;font-size:10px;color:#1e1919;font-weight:bold;-webkit-text-stroke:0.2px #1e1919;transform:scaleX(0.8248);">Tags</span>
<span class="t" style="left:699.00px;top:352.18px;font-size:9px;color:#524a3e;-webkit-text-stroke:0.1px #524a3e;transform:scaleX(0.7975);">Who can see my tags?</span>
<span class="t" style="left:590.40px;top:374.98px;font-size:9px;color:#1e1919;-webkit-text-stroke:0.1px #1e1919;">#</span>
<span class="t" style="left:597.90px;top:373.71px;font-size:10.5px;color:#736c64;-webkit-text-stroke:0.3px #736c64;transform:scaleX(0.8224);">Add a tag</span>
<span class="t" style="left:586.30px;top:403.54px;font-size:10px;color:#736c64;-webkit-text-stroke:0.15px #736c64;transform:scaleX(0.8806);">Add a few details about this folder here.</span>
<span class="t" style="left:608.20px;top:568.69px;font-size:11px;color:#524a3e;-webkit-text-stroke:0.45px #524a3e;transform:scaleX(0.9518);">Pinned items</span>
<span class="t" style="left:608.20px;top:601.99px;font-size:11px;color:#524a3e;-webkit-text-stroke:0.45px #524a3e;transform:scaleX(1.0188);">Activity</span>
</body></html>
